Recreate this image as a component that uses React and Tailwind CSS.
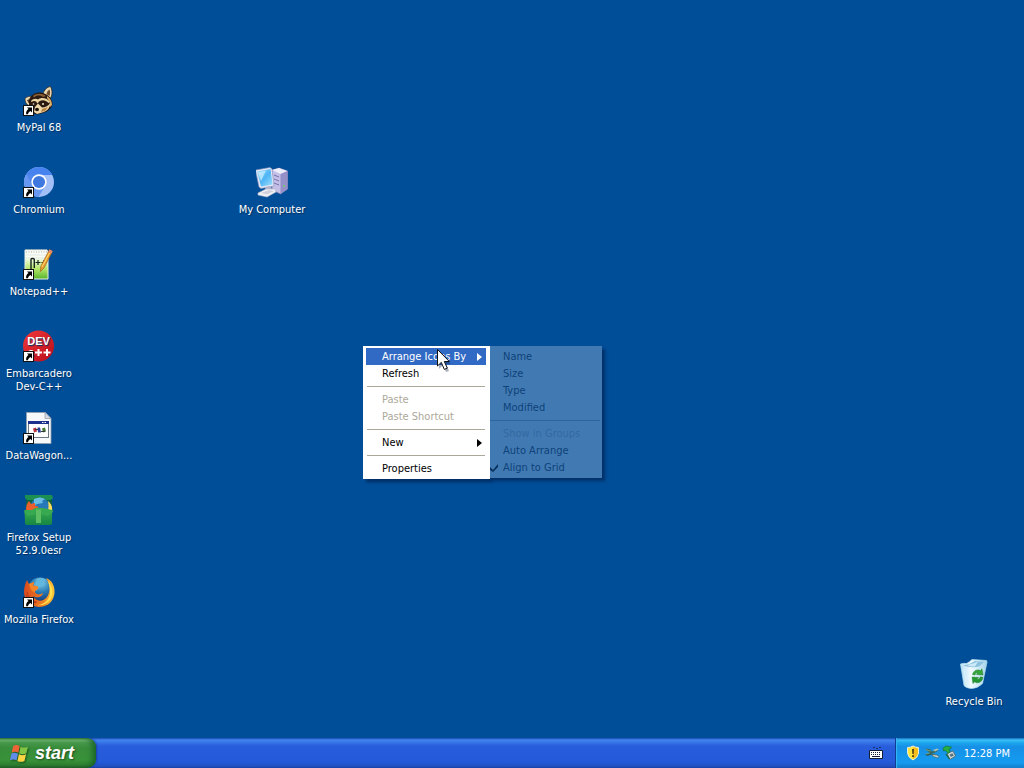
import React from 'react';

function ShortcutArrow() {
  return (
    <g>
      <rect x="0.5" y="21.5" width="10" height="10" fill="#fff" stroke="#111" strokeWidth="1" />
      <path d="M4 23.500h5v5l-1.600-1.600c-1.500.8-2.200 1.800-2.400 3.400H3.200c-.4-2.200.4-4 2.300-5.300z" fill="#000" />
    </g>
  );
}

function Svg({ children }) {
  return (
    <svg viewBox="0 0 32 32" className="size-8 shrink-0" aria-hidden="true">
      {children}
    </svg>
  );
}

function RaccoonIcon() {
  return (
    <Svg>
      <path d="M20 10C21 6 24 3 27.500 2.500c1.500 3 2 6 1 9.500l-2 4z" fill="#ead9b0" stroke="#2b1a10" strokeWidth="0.7" />
      <path d="M23.500 10c.5-2 1.500-4 3-4.500.8 2 .8 4 0 6.500z" fill="#6d4a2c" />
      <path d="M2 14.500c2-2 5-2.500 7-2l1 5-4 4c-3-1-4-4-4-7z" fill="#ead9b0" stroke="#2b1a10" strokeWidth="0.6" />
      <path d="M4 16l3-1 .5 3-2 1z" fill="#5a3a22" />
      <path d="M6 16C8 10 14 7.500 20 9c5 1.500 9 5 9.500 11-1 5-5 8-10 9-3 1.500-7 2-8.500.5C7 28 5.500 21 6 16z" fill="#2b1a11" />
      <path d="M10 12c3-3 9-3 13 0l-3 1c-3-2-6-2-9 .5z" fill="#8a5f35" />
      <path d="M8 17c2-2.500 5-3 7-1.500 3-2.500 8-2 12 2l-1.500 1.500c-3-3-6-3.500-9.500-1.500l-1.500 2-1.500-2q-2-1-4.500.5z" fill="#ecd6a4" />
      <path d="M24 12c3 2 5 5 5 9l-2 2c0-4-1-7-3-9z" fill="#d8b06b" />
      <path d="M12 23l3-3.500 4 4c3 0 6-1.500 8-4 .5 4-3 8-8 9l-5 1.500-3-2z" fill="#efd9ab" />
      <path d="M19 25l6-2-3 4-4 1z" fill="#b98645" />
      <ellipse cx="14" cy="25.500" rx="2" ry="1.700" fill="#1c110c" />
      <circle cx="20" cy="20" r="1" fill="#f6e8c9" />
      <circle cx="10.500" cy="20" r="0.8" fill="#f6e8c9" />
      <ShortcutArrow />
    </Svg>
  );
}

function ChromiumIcon() {
  return (
    <Svg>
      <circle cx="16" cy="16" r="15" fill="#a2bff8" />
      <path d="M16 16L2.800 8.800A15 15 0 0 1 29.300 9H16z" fill="#4783ef" />
      <path d="M3 8.500A15 15 0 0 0 15.500 31l7-11.500-12.800 0z" fill="#6797f0" />
      <path d="M3 8.500l6.500 11.500L16 22.500 9 9.500z" fill="#5288ee" />
      <circle cx="16" cy="16" r="7.700" fill="#fff" />
      <circle cx="16" cy="16" r="6.100" fill="#3f78de" />
      <ShortcutArrow />
    </Svg>
  );
}

function NotepadIcon() {
  return (
    <Svg>
      <defs>
        <linearGradient id="np" x1="0" y1="0" x2="0" y2="1">
          <stop offset="0.25" stopColor="#fafcf5" />
          <stop offset="0.65" stopColor="#b4e568" />
          <stop offset="1" stopColor="#56b52c" />
        </linearGradient>
      </defs>
      <path d="M2 2h22l1 2v27H2z" fill="url(#np)" stroke="#e8ede4" strokeWidth="1" />
      <path d="M3 1.500h21M3 4h22" stroke="#a6adb0" strokeDasharray="1 1.500" />
      <path d="M3 7h22M3 10h22" stroke="#d3ddd9" strokeWidth="0.6" />
      <path d="M8 21V11.500q0-1 1-1h1q1.300 0 1.300 1V20" fill="none" stroke="#17251e" strokeWidth="1.400" />
      <path d="M12.500 14.500h5M15 12v5M18.500 14.500h5M21 12v5" stroke="#17251e" strokeWidth="1.200" />
      <path d="M26.500 1.500l3 1.800L21 20l-3.500 3.500.2-5z" fill="#e99b2b" stroke="#9c5c19" strokeWidth="0.6" />
      <path d="M26.500 1.500l3 1.800-1.200 2.200-3-1.600z" fill="#ea8975" />
      <path d="M26.500 5L19 19" stroke="#ffe075" />
      <ShortcutArrow />
    </Svg>
  );
}

function DevIcon() {
  return (
    <Svg>
      <defs>
        <linearGradient id="dv" x1="0" y1="0" x2="1" y2="1">
          <stop offset="0" stopColor="#f2383b" />
          <stop offset="1" stopColor="#b70d18" />
        </linearGradient>
      </defs>
      <circle cx="15.500" cy="16" r="15.500" fill="url(#dv)" />
      <text x="15.500" y="15" textAnchor="middle" fill="#fff" fontFamily="Liberation Sans, sans-serif" fontSize="11" fontWeight="700">DEV</text>
      <text x="8" y="26" textAnchor="middle" fill="#fff" fontFamily="Liberation Sans, sans-serif" fontSize="9" fontWeight="700">C</text>
      <path d="M12 22.500h7M15.500 19v7M20.500 22.500h7M24 19v7" stroke="#fff" strokeWidth="2" />
      <ShortcutArrow />
    </Svg>
  );
}

function BatchIcon() {
  return (
    <Svg>
      <path d="M3.500.5h19l5.500 6V31.500H3.500z" fill="#f7f8f9" stroke="#93a0af" strokeWidth="0.8" />
      <path d="M22 .5v6h6z" fill="#d4dce4" stroke="#8997a6" strokeWidth="0.7" />
      <rect x="5.500" y="9.500" width="20" height="16" fill="#fff" stroke="#6e7883" />
      <path d="M5 9h21v3H5z" fill="#1c318b" />
      <path d="M19 10.500h1.500M21.500 10.500H23" stroke="#fff" />
      <path d="M10 16.500l3-1 1 4-3 1z" fill="#bc3740" />
      <path d="M14.500 15.500h2.500l1 5h-3z" fill="#243c98" />
      <path d="M19 16.500l3-1 1 4-3 1z" fill="#497a35" />
      <path d="M12 17.500h3M18 19.500h4" stroke="#34363d" />
      <ShortcutArrow />
    </Svg>
  );
}

function FirefoxShape() {
  return (
    <g>
      <circle cx="17" cy="14" r="12.500" fill="url(#ffblue)" />
      <path d="M14 3c3-2 7-1 9 1l-3 2 2 3-5 2-4 4-3-4z" fill="#61b8df" />
      <path d="M23 2c6 2 9 8 8.500 15C30.500 26 24 31 16 31 7 30 1 24 1 16c0-4 1-8 3-12l2 4 5-2-1 4c4-1 6 1 5 3-2 1-3 1-3 3 1 3 5 3 8 1-1 5-7 5-10 3 3 6 10 6 14 1 4-6 3-13-1-19z" fill="url(#fffire)" />
      <path d="M25 5c5 5 6 13 2 19-3 4-8 6-13 5 8 0 14-7 13-14 0-4-1-7-2-10z" fill="#ffe250" />
      <path d="M6 8l5-2-1 4c4-1 6 1 5 3-2 1-3 1-3 3-3 0-5-3-6-8z" fill="#f58527" />
      <path d="M4 16c1 5 5 9 10 10M3 19c2 4 6 7 10 8" stroke="#b9351b" strokeWidth="1" fill="none" />
    </g>
  );
}

function FirefoxDefs() {
  return (
    <defs>
      <radialGradient id="ffblue" cx="0.55" cy="0.2" r="0.8">
        <stop offset="0" stopColor="#83cce4" />
        <stop offset="0.5" stopColor="#267bb7" />
        <stop offset="1" stopColor="#153571" />
      </radialGradient>
      <linearGradient id="fffire" x1="0" y1="0" x2="1" y2="0">
        <stop offset="0" stopColor="#d84a20" />
        <stop offset="0.6" stopColor="#ee7b22" />
        <stop offset="1" stopColor="#fcca38" />
      </linearGradient>
    </defs>
  );
}

function FirefoxIcon() {
  return (
    <Svg>
      <FirefoxDefs />
      <FirefoxShape />
      <ShortcutArrow />
    </Svg>
  );
}

function FirefoxSetupIcon() {
  return (
    <Svg>
      <defs>
        <linearGradient id="box" x1="0" y1="0" x2="0" y2="1">
          <stop offset="0" stopColor="#3fae4e" />
          <stop offset="1" stopColor="#168644" />
        </linearGradient>
      </defs>
      <path d="M2 1h27l1 3-2 2H4L2 4z" fill="#1c9050" />
      <path d="M3 6h26v11H3z" fill="#0c6044" />
      <circle cx="17" cy="13" r="9.500" fill="#2678b8" />
      <path d="M11 5q6-3 11 0l-3 2 1 2-6 1-3 2z" fill="#69bce2" />
      <path d="M3 16q0-6 3-9l2 3 4-1v3q4 0 3 2l-3 3z" fill="#ea5f2b" />
      <path d="M25 7q5 4 4 10h-4q1-5 0-10z" fill="#ffdc5c" />
      <path d="M1.500 16q6 2 9-1t18.500 1v13q0 2-2 2H4q-2 0-2-2z" fill="url(#box)" />
      <path d="M1.500 16l11 0v4L5 22l-3.500-3zM18 16l11.500 0 .5 2-5 4-7-2z" fill="#37a950" />
      <path d="M13 15.500h5V29h-5z" fill="#5cbd62" />
    </Svg>
  );
}

function ComputerIcon() {
  return (
    <Svg>
      <defs>
        <linearGradient id="screen" x1="0" y1="0" x2="1" y2="1">
          <stop offset="0" stopColor="#b0e7ff" />
          <stop offset="0.5" stopColor="#4eb4f5" />
          <stop offset="1" stopColor="#a0e0fb" />
        </linearGradient>
      </defs>
      <path d="M16 4l7-2 8.500 3v18l-7 5-8.500-4z" fill="#c4bfe6" stroke="#7875aa" strokeWidth="0.6" />
      <path d="M16 4l7-2 8.500 3-7 3z" fill="#eeeefa" />
      <path d="M24.500 8l7-3v18l-7 5z" fill="#9690c8" />
      <path d="M18 9l5 2M18 13l5 2M18 17l5 2" stroke="#7771ac" strokeWidth="1" />
      <circle cx="28" cy="20" r="1" fill="#71d463" />
      <path d="M-.5 4L14 1.500l2 1.500 2 17-13 2.500L3 21z" fill="#e5e8f4" stroke="#8792bd" strokeWidth="0.6" />
      <path d="M1 5.500L14.500 3l2 15.500-11.500 2z" fill="url(#screen)" />
      <path d="M2 6.500l8-2L5 15z" fill="#d7f3ff" opacity="0.65" />
      <path d="M9 21l6-1 1 4-6 2z" fill="#b3b4cf" />
      <path d="M2 27l8-4h9l1 3-9 5-9-2z" fill="#f0f1f5" stroke="#b2b3ca" strokeWidth="0.6" />
      <path d="M5 27l8-3 5 1-7 3.500z" fill="#cfd0dc" />
    </Svg>
  );
}

function RecycleIcon() {
  return (
    <Svg>
      <defs>
        <linearGradient id="bin" x1="0" y1="0" x2="1" y2="0">
          <stop offset="0" stopColor="#b5e0f5" />
          <stop offset="0.4" stopColor="#f2fbff" />
          <stop offset="1" stopColor="#a3d3ea" />
        </linearGradient>
      </defs>
      <path d="M2.500 6q3-1 6-.5 3-1.500 5.500-4l14.500 1q1 1.500 0 4l-4 19q-5 5-11 5-6-.5-7.500-3z" fill="url(#bin)" stroke="#b9e2f2" strokeWidth="0.7" />
      <path d="M5 7.500q7-1 12-4.500l9 1-5 4.500q-8 2-16-1z" fill="#8bc1de" />
      <path d="M9 7l6-1.500L20 3.500l-3 5q-5 .5-8-1.500z" fill="#cdeaf7" />
      <path d="M6 11l2.500 16M25 10l-3 14" stroke="#dcf3fb" />
      <path d="M14.500 16.500q1.500-5 6.500-4.500l1.500.8 1.500-2 1 6.200-6.500-.5 1.500-1.500q-2.500-1-3 2z" fill="#35a53a" stroke="#187c27" strokeWidth="0.5" />
      <path d="M14 19l6.500.500-1.700 1.500q2.700 1 3.700-2.200l2.500.7q-1.500 5.500-6.500 5.200l-1.800-.9-1.700 1.700z" fill="#25972e" stroke="#187c27" strokeWidth="0.5" />
    </Svg>
  );
}

function DesktopIcon({ icon, label, className = '' }) {
  return (
    <button type="button" className={'flex h-[82px] w-[78px] flex-col items-center gap-[5px] text-center leading-[13px] text-white [text-shadow:1px_1px_1px_#003060] ' + className}>
      {icon}
      <span className="w-full whitespace-pre-line">{label}</span>
    </button>
  );
}

function Separator() {
  return <div role="separator" className="px-px py-1"><div className="h-px bg-[#aca899]" /></div>;
}

function MenuItem({ label, submenu, active, disabled }) {
  return (
    <button
      type="button"
      role="menuitem"
      disabled={disabled}
      aria-haspopup={submenu ? 'menu' : undefined}
      className={'flex h-[17px] w-full items-center justify-between pr-1 pl-4 ' + (active ? 'bg-[#316ac5] text-white' : disabled ? 'text-[#aca899]' : 'text-black')}
    >
      {label}
      {submenu && (
        <svg viewBox="0 0 5 8" className="h-2 w-[5px]" aria-hidden="true"><path d="M0 0l5 4-5 4z" fill="currentColor" /></svg>
      )}
    </button>
  );
}

function SubItem({ label, checked, disabled }) {
  return (
    <button
      type="button"
      role={checked ? 'menuitemcheckbox' : 'menuitem'}
      aria-checked={checked ? true : undefined}
      disabled={disabled}
      className={'flex h-[17px] w-full items-center ' + (disabled ? 'text-[#3369a1]' : 'text-[#0e4279]')}
    >
      <span className="w-[13px] shrink-0">
        {checked && (
          <svg viewBox="0 0 8 8" className="size-2" aria-hidden="true"><path d="M0 3l3 3 5-6v3L3 8 0 6z" fill="#072f5d" /></svg>
        )}
      </span>
      {label}
    </button>
  );
}

function ContextMenu() {
  return (
    <div className="absolute top-[346px] left-[363px] flex items-start">
      <div role="menu" aria-label="Desktop" className="w-[127px] bg-white py-0.5 pr-1 pl-[3px] shadow-[3px_3px_3px_rgba(0,20,60,0.55)]">
        <MenuItem label="Arrange Icons By" submenu active />
        <MenuItem label="Refresh" />
        <Separator />
        <MenuItem label="Paste" disabled />
        <MenuItem label="Paste Shortcut" disabled />
        <Separator />
        <MenuItem label="New" submenu />
        <Separator />
        <MenuItem label="Properties" />
      </div>
      <div role="menu" aria-label="Arrange Icons By" className="w-[112px] bg-[#417ab3] py-0.5 shadow-[3px_3px_3px_rgba(0,20,60,0.5)]">
        <SubItem label="Name" />
        <SubItem label="Size" />
        <SubItem label="Type" />
        <SubItem label="Modified" />
        <div role="separator" className="py-1 pr-0.5"><div className="h-px bg-[#2c659e]" /></div>
        <SubItem label="Show in Groups" disabled />
        <SubItem label="Auto Arrange" />
        <SubItem label="Align to Grid" checked />
      </div>
      <svg viewBox="0 0 14 24" className="absolute top-[3px] left-[74px] h-6 w-3.5" aria-hidden="true">
        <path d="M2 3v17l4-4 3 7 3-1-3-7h5z" fill="#001840" opacity="0.35" />
        <path d="M.5.5v16.500l3.800-3.600 3 7 3-1.300-3-6.600h5z" fill="#fff" stroke="#111" strokeWidth="1" />
      </svg>
    </div>
  );
}

function WindowsFlag() {
  return (
    <svg viewBox="0 0 18 18" className="size-[19px] drop-shadow-[1px_1px_1px_rgba(0,40,0,0.6)]" aria-hidden="true">
      <path d="M3 2q3-2 6.200 0L7.900 8.300q-3-1.800-6.400 0z" fill="#ed6537" />
      <path d="M10 2.500q3 1.800 7 0L15.500 8.800q-3.500 1.700-6.800 0z" fill="#82c444" />
      <path d="M1.200 9.200q3-1.800 6.400 0L6.200 15.500q-3-1.800-6.200 0z" fill="#608be8" />
      <path d="M8.500 9.700q3 1.800 6.700 0l-1.500 6.300q-3.500 1.700-6.700 0z" fill="#ffd443" />
    </svg>
  );
}

function Taskbar() {
  return (
    <footer className="flex h-[30px] shrink-0 items-stretch bg-[linear-gradient(to_bottom,#1c49b0_0,#3f86f2_2px,#3a79e9_4px,#285ddb_8px,#245bdb_23px,#2152c5_28px,#1941a5_30px)]">
      <button
        type="button"
        className="flex w-24 items-center gap-1.5 rounded-r-[9px] bg-[linear-gradient(to_bottom,#2f782f_0,#70b56e_2px,#45974a_5px,#388d3b_10px,#389239_22px,#2f8031_27px,#205c26_30px)] pl-2.5 text-white shadow-[inset_-5px_0_6px_-2px_#176026,1px_0_2px_#1941a5]"
      >
        <WindowsFlag />
        <span className="font-['Liberation_Sans',sans-serif] text-lg leading-5 font-bold italic [text-shadow:1px_1px_2px_#204920]">start</span>
      </button>
      <div className="flex flex-1 items-center justify-end pr-3">
        <button type="button" aria-label="Language bar">
          <svg viewBox="0 0 14 14" className="size-3.5" aria-hidden="true">
            <path d="M4 1.500h2M7 2.500h2M10 1.500h2" stroke="#183363" fill="none" />
            <path d="M.5 4.500h13v8H.5z" fill="#fff" stroke="#111b33" />
            <path d="M2 6.500h10M2 8.500h10" stroke="#111b33" strokeDasharray="1 1" />
            <path d="M3 10.500h8" stroke="#111b33" />
          </svg>
        </button>
      </div>
      <div className="flex w-[129px] items-center border-l border-[#103c94] bg-[linear-gradient(to_bottom,#1366b6_0,#3ac1f8_2px,#1ca5ed_5px,#168fe6_9px,#1499ed_20px,#169af0_25px,#127ac5_30px)] pr-3.5 pl-2.5 text-white shadow-[inset_1px_0_1px_#37b7f4]">
        <div className="flex items-center gap-0.5">
          <svg viewBox="0 0 16 16" className="size-4" aria-hidden="true">
            <path d="M7 1q2.500 1.500 5.500 1.500V8q-.5 4.500-5.500 7Q2 12.500 1.500 8V2.500Q4.500 2.500 7 1z" fill="#ffe53b" stroke="#e9edd5" />
            <path d="M7 2q2.500 1.200 5 1.300V8q-.7 4-5 6z" fill="#f5bd1c" />
            <path d="M6.200 4h1.600l-.2 5H6.400zM6.200 10.300h1.600v1.700H6.200z" fill="#30290d" />
          </svg>
          <svg viewBox="0 0 16 16" className="size-4" aria-hidden="true">
            <path d="M1 3.500l5 .5 2 2.500 5-2 1.500 1-5 3-4-.5z" fill="#3b6a60" />
            <path d="M1 9.500l5-2 4 2 4 .5.500 2-5-.5-2-2-4 1.500z" fill="#355c54" />
            <path d="M9 5l4-1.500 2 1-4 2z" fill="#a9c0b8" />
            <path d="M8 9.500l5 .5 2 1.500-1 1.500-5-1.500z" fill="#c0cfca" stroke="#37534b" strokeWidth="0.5" />
            <path d="M1.500 4.500l5 1.500M2 9l4-1" stroke="#6fae8f" strokeWidth="0.8" />
          </svg>
          <svg viewBox="0 0 16 16" className="size-4" aria-hidden="true">
            <path d="M5 8.500l6-2.500 2.500 5-5.500 3.500z" fill="#d3dade" stroke="#46616b" strokeWidth="0.8" />
            <path d="M7.500 9.500l3-1.300 1.300 2.300-3 1.600z" fill="#567582" />
            <path d="M1 3l3-2 5.500 1-1 2H7l1 3-2 1.500-2.500-3L1.500 6z" fill="#27ae42" stroke="#107138" strokeWidth="0.6" />
            <path d="M4 9l3.500 5" stroke="#17663b" strokeWidth="1.300" />
          </svg>
        </div>
        <time className="ml-auto whitespace-nowrap">12:28 PM</time>
      </div>
    </footer>
  );
}

export default function App() {
  return (
    <div className="flex min-h-screen flex-col overflow-hidden bg-[#004e98] font-['DejaVu_Sans_Condensed','DejaVu_Sans',sans-serif] text-[11px] leading-[13px]">
      <main className="relative flex flex-1 items-start pt-[84px]">
        <div className="flex flex-col">
          <DesktopIcon icon={<RaccoonIcon />} label="MyPal 68" />
          <DesktopIcon icon={<ChromiumIcon />} label="Chromium" />
          <DesktopIcon icon={<NotepadIcon />} label="Notepad++" />
          <DesktopIcon icon={<DevIcon />} label={'Embarcadero\nDev-C++'} />
          <DesktopIcon icon={<BatchIcon />} label="DataWagon..." />
          <DesktopIcon icon={<FirefoxSetupIcon />} label={'Firefox Setup\n52.9.0esr'} />
          <DesktopIcon icon={<FirefoxIcon />} label="Mozilla Firefox" />
        </div>
        <DesktopIcon icon={<ComputerIcon />} label="My Computer" className="absolute top-[166px] left-[233px]" />
        <DesktopIcon icon={<RecycleIcon />} label="Recycle Bin" className="absolute right-[11px] -bottom-0.5" />
        <ContextMenu />
      </main>
      <Taskbar />
    </div>
  );
}
